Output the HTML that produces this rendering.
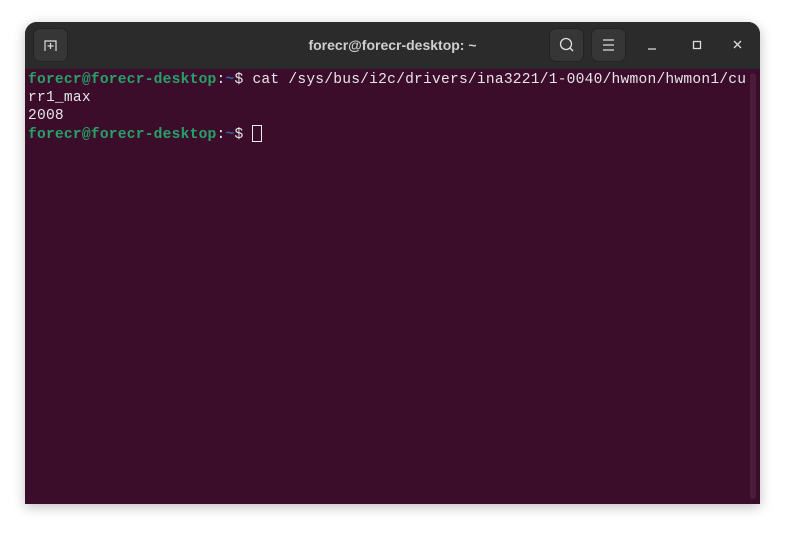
<!DOCTYPE html>
<html><head><meta charset="utf-8"><style>
html,body{margin:0;padding:0;background:#fff;width:786px;height:533px;overflow:hidden}
.win{position:absolute;left:25px;top:22px;width:735px;height:482px;border-radius:12px 12px 0 0;overflow:hidden;box-shadow:0 3px 12px rgba(0,0,0,.25);background:#3b0d2b}
.hdr{position:absolute;left:0;top:0;width:735px;height:47px;background:#2b2b2b}
.title{position:absolute;left:0;width:735px;top:15px;text-align:center;color:#cfcfcf;font:bold 14px "Liberation Sans",sans-serif}
.btn{position:absolute;top:6px;width:35px;height:34px;border-radius:7px;background:#363636;border:1px solid #232323;box-sizing:border-box}
.term{position:absolute;left:3px;top:49px;font:14.6px/18px "Liberation Mono",monospace;letter-spacing:0.22px;color:#e6e6e6;white-space:pre}
.g{color:#26a269;font-weight:bold}.b{color:#3465a4;font-weight:bold}
.cur{display:inline-block;width:10px;height:17px;border:1.5px solid #eee;box-sizing:border-box;vertical-align:-4px}
.sb{position:absolute;left:725px;top:51px;width:6px;height:426px;border-radius:3px;background:#4a1c3a}
</style></head><body>
<div class="win">
<div class="hdr">
<div class="btn" style="left:8px"><svg width="33" height="32"><path d="M11 22V12h11v10M16.5 14v6M13.5 17h6" stroke="#ddd" stroke-width="1.2" fill="none"/></svg></div>
<div class="title">forecr@forecr-desktop: ~</div>
<div class="btn" style="left:524px"><svg width="33" height="32"><circle cx="16" cy="15" r="5.5" stroke="#ddd" stroke-width="1.3" fill="none"/><path d="M20 19l3 3" stroke="#ddd" stroke-width="1.5"/></svg></div>
<div class="btn" style="left:566px"><svg width="33" height="32"><path d="M11 11h11M11 16h11M11 21h11" stroke="#ddd" stroke-width="1.2"/></svg></div>
<svg style="position:absolute;left:620px;top:15px" width="100" height="16"><path d="M3 12h8" stroke="#ddd" stroke-width="1.3"/><rect x="48.5" y="4.5" width="7" height="7" stroke="#ddd" stroke-width="1.3" fill="none"/><path d="M89 4l7 7M96 4l-7 7" stroke="#ddd" stroke-width="1.3"/></svg>
</div>
<div class="term"><span class="g">forecr@forecr-desktop</span>:<span class="b">~</span>$ cat /sys/bus/i2c/drivers/ina3221/1-0040/hwmon/hwmon1/cu
rr1_max
2008
<span class="g">forecr@forecr-desktop</span>:<span class="b">~</span>$ <span class="cur"></span></div>
<div class="sb"></div>
</div>
</body></html>
